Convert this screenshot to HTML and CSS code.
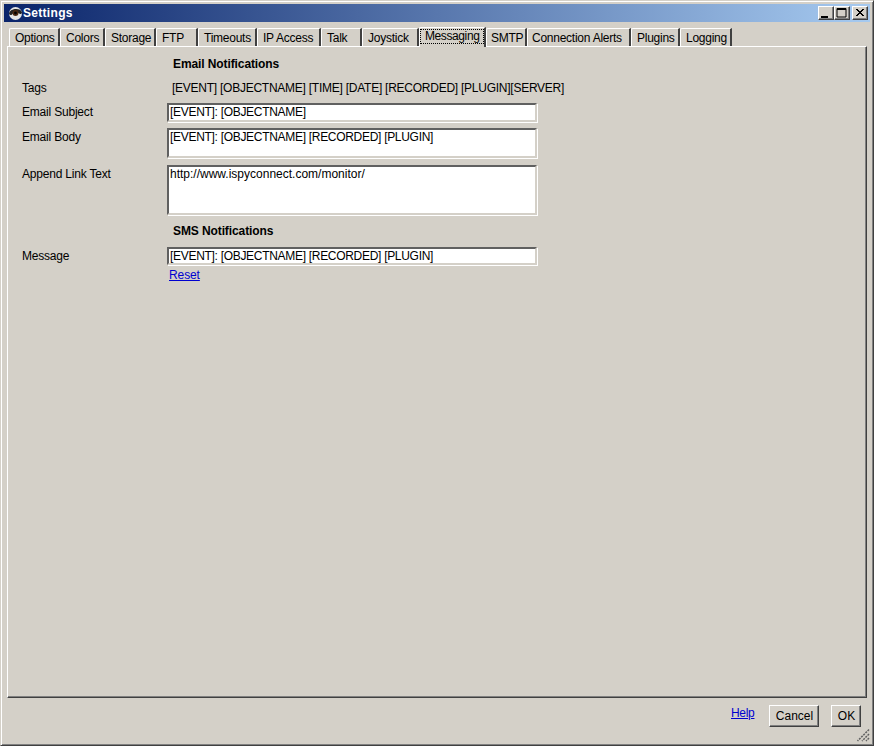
FILE: index.html
```html
<!DOCTYPE html>
<html lang="en">
<head>
<meta charset="utf-8">
<title>Settings</title>
<link rel="stylesheet" href="styles.css">
</head>
<body>
<div class="window">
  <header class="titlebar">
    <svg class="app-icon" width="16" height="16" viewBox="0 0 16 16">
      <circle cx="8.500" cy="8.500" r="6.500" fill="#e4e4e4"/>
      <path d="M2 8.500C3 3 14 2.500 15 7.500C15 8.500 14 9 13 9C11 6.500 6 7 4.500 10C3.500 10 2 9.500 2 8.500Z" fill="#222"/>
      <circle cx="8.500" cy="8" r="3" fill="#4a2812"/>
      <circle cx="8.500" cy="8" r="1.400" fill="#000"/>
    </svg>
    <span class="title-text">Settings</span>
    <div class="caption-buttons">
      <button class="cap-btn"><svg width="15" height="14" viewBox="0 0 15 14"><rect x="3" y="10" width="7" height="2" fill="#000"/></svg></button>
      <button class="cap-btn"><svg width="15" height="14" viewBox="0 0 15 14"><path d="M3 2.500h9v8.500H3z M3 3.500h9" fill="none" stroke="#000"/></svg></button>
      <button class="cap-btn cap-close"><svg width="15" height="14" viewBox="0 0 15 14"><path d="M4 3l7 7M5 3l7 7M11 3l-7 7M12 3l-7 7" stroke="#000" fill="none"/></svg></button>
    </div>
  </header>
  <nav class="tabs">
    <div class="tab">Options</div>
    <div class="tab">Colors</div>
    <div class="tab">Storage</div>
    <div class="tab">FTP</div>
    <div class="tab">Timeouts</div>
    <div class="tab">IP Access</div>
    <div class="tab">Talk</div>
    <div class="tab">Joystick</div>
    <div class="tab tab-active"><span class="tab-focus">Messaging</span></div>
    <div class="tab tab-tight">SMTP</div>
    <div class="tab tab-tight">Connection Alerts</div>
    <div class="tab">Plugins</div>
    <div class="tab">Logging</div>
  </nav>
  <main class="panel">
    <div class="row row-head"><span class="label"></span><span class="heading">Email Notifications</span></div>
    <div class="row row-tags"><span class="label">Tags</span><span class="tags">[EVENT] [OBJECTNAME] [TIME] [DATE] [RECORDED] [PLUGIN][SERVER]</span></div>
    <div class="row row-subject"><span class="label">Email Subject</span><input class="field field-caps field-line" value="[EVENT]: [OBJECTNAME]"></div>
    <div class="row row-body"><span class="label">Email Body</span><textarea class="field field-caps area-body">[EVENT]: [OBJECTNAME] [RECORDED] [PLUGIN]</textarea></div>
    <div class="row row-append"><span class="label">Append Link Text</span><textarea class="field area-append">http://www.ispyconnect.com/monitor/</textarea></div>
    <div class="row row-head2"><span class="label"></span><span class="heading">SMS Notifications</span></div>
    <div class="row row-message"><span class="label">Message</span><input class="field field-caps" value="[EVENT]: [OBJECTNAME] [RECORDED] [PLUGIN]"></div>
    <div class="row row-reset"><span class="label"></span><a class="link" href="#">Reset</a></div>
  </main>
  <footer class="footer">
    <a class="link help" href="#">Help</a>
    <button class="btn btn-cancel">Cancel</button>
    <button class="btn btn-ok">OK</button>
    <svg class="grip" width="14" height="14" viewBox="0 0 14 14">
      <path d="M13 1.500L1.500 13M13 6L6 13M13 10L10 13" stroke="#606060" stroke-width="1.500" stroke-dasharray="2 1" fill="none"/>
    </svg>
  </footer>
</div>
</body>
</html>
```
FILE: styles.css
```css
* { box-sizing: border-box; }
html, body { margin: 0; padding: 0; }
body {
  width: 874px;
  height: 746px;
  font-family: "Liberation Sans", Arial, sans-serif;
  font-size: 12px;
  color: #000;
  background: #d4d0c8;
  overflow: hidden;
}
.window {
  position: relative;
  width: 874px;
  height: 746px;
  display: flex;
  flex-direction: column;
  padding: 3px;
  background: #d4d0c8;
  border: 1px solid;
  border-color: #d4d0c8 #404040 #404040 #d4d0c8;
  box-shadow: inset 1px 1px 0 #fff, inset -1px -1px 0 #808080;
}
.titlebar {
  height: 18px;
  flex: none;
  display: flex;
  align-items: center;
  padding-left: 3px;
  background: linear-gradient(90deg, #0a246a, #a6caf0);
  color: #fff;
}
.app-icon { flex: none; }
.title-text {
  font-weight: 700;
  font-size: 12px;
  line-height: 18px;
  letter-spacing: 0.3px;
}
.caption-buttons {
  margin-left: auto;
  display: flex;
  padding-right: 2px;
}
.cap-btn {
  width: 16px;
  height: 14px;
  padding: 0;
  display: block;
  background: #d4d0c8;
  border: 1px solid;
  border-color: #fff #404040 #404040 #fff;
  box-shadow: inset -1px -1px 0 #808080;
}
.cap-btn svg { display: block; margin: -1px 0 0 -1px; }
.cap-close { margin-left: 2px; }
.tabs {
  flex: none;
  height: 24px;
  padding: 6px 0 0 5px;
  display: grid;
  grid-template-columns: 51px 45px 51px 42px 59px 64px 41px 57px 67px 41px 104px 49px 52px;
}
.tab {
  height: 18px;
  padding-left: 5px;
  line-height: 19px;
  letter-spacing: -0.25px;
  white-space: nowrap;
  background: #d4d0c8;
  border-top: 1px solid #fff;
  border-left: 1px solid #fff;
  border-right: 2px solid #404040;
  border-top-left-radius: 2px;
}
.tab-tight { padding-left: 4px; }
.tab-active {
  position: relative;
  height: 20px;
  margin-top: -1px;
  padding: 2px 0 0 1px;
  z-index: 2;
}
.tab-focus {
  display: block;
  height: 13px;
  width: 62px;
  padding-left: 4px;
  line-height: 12px;
  letter-spacing: -0.4px;
  outline: 1px dotted #000;
}
.panel {
  flex: none;
  width: 860px;
  height: 652px;
  margin-left: 3px;
  padding: 8px 0 0 14px;
  background: #d4d0c8;
  border: 1px solid;
  border-color: #fff #404040 #404040 #fff;
  box-shadow: inset -1px -1px 0 #808080;
}
.row { display: flex; align-items: flex-start; line-height: 18px; }
.label { width: 145px; flex: none; letter-spacing: -0.2px; }
.heading { margin-left: 6px; font-weight: 700; letter-spacing: -0.1px; }
.tags { margin-left: 5px; white-space: nowrap; letter-spacing: -0.25px; }
.row-head { height: 18px; }
.row-tags { height: 18px; margin-top: 6px; }
.row-subject { height: 19px; margin-top: 6px; }
.row-body { height: 30px; margin-top: 6px; }
.row-append { height: 50px; margin-top: 7px; }
.row-head2 { height: 20px; margin-top: 6px; line-height: 20px; }
.row-message { height: 18px; margin-top: 6px; }
.row-reset { margin-top: 1px; }
.field {
  display: block;
  width: 370px;
  height: 100%;
  margin: 0;
  padding: 0 1px;
  font: inherit;
  line-height: 14px;
  color: #000;
  background: #fff;
  border: 2px solid;
  border-color: #606060 #d4d0c8 #d4d0c8 #606060;
  box-shadow: 1px 1px 0 #fff;
  resize: none;
  overflow: hidden;
  border-radius: 0;
  outline: none;
}
.field-caps { letter-spacing: -0.3px; }
.field-line { padding-bottom: 1px; }
.link { color: #0000d0; text-decoration: underline; margin-left: 2px; letter-spacing: -0.1px; }
.footer {
  flex: 1;
  display: flex;
  align-items: flex-start;
  position: relative;
}
.help { margin-left: 727px; margin-top: 7px; line-height: 16px; letter-spacing: -0.3px; }
.btn {
  height: 22px;
  padding: 0;
  font: inherit;
  line-height: 16px;
  color: #000;
  background: #d4d0c8;
  border: 1px solid;
  border-color: #fff #404040 #404040 #fff;
  box-shadow: inset -1px -1px 0 #808080;
  margin-top: 7px;
}
.btn-cancel { width: 50px; margin-left: 15px; }
.btn-ok { width: 30px; margin-left: 12px; }
.grip { position: absolute; right: 0; bottom: 0; }
```
